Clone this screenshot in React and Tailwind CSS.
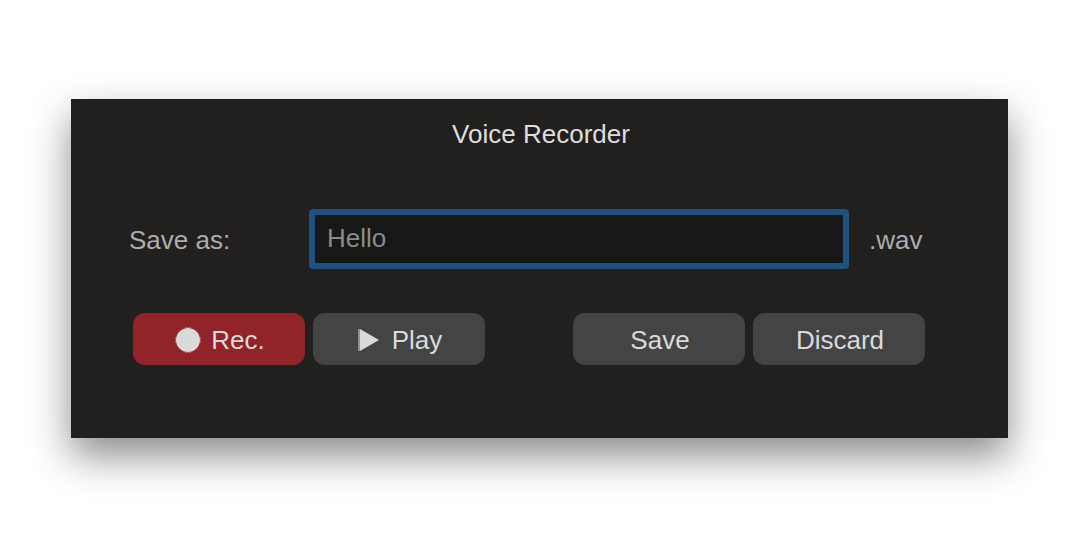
import { useState } from "react";

function ActionButton({ className = "bg-[#444444]", children }) {
  return (
    <button
      type="button"
      className={`flex h-[52px] w-[172px] items-center justify-center rounded-xl pt-0.5 pl-0.5 text-[#d9dbda] ${className}`}
    >
      {children}
    </button>
  );
}

export default function App() {
  const [name, setName] = useState("Hello");

  return (
    <main className="flex min-h-screen items-center bg-white pr-[70px] pl-[71px] font-['Liberation_Sans',Arial,sans-serif] text-[26px] leading-8">
      <section className="flex-1 bg-[#21201e] pt-[19px] pr-[83px] pb-[73px] pl-[58px] shadow-[0_18px_38px_rgba(0,0,0,0.46)]">
        <h1 className="pl-7 text-center text-[#dededd]">Voice Recorder</h1>

        <div className="mt-[59px] flex items-center">
          <label htmlFor="filename" className="w-[180px] pt-0.5 text-[#adadac]">
            Save as:
          </label>
          <input
            id="filename"
            type="text"
            value={name}
            onChange={(event) => setName(event.target.value)}
            className="h-[60px] min-w-0 flex-1 rounded border-6 border-[#1d5180] bg-[#171717] px-3 pb-0.5 text-[#8b8b8a] outline-none"
          />
          <span className="w-[76px] pt-0.5 pl-5 text-[#adadac]">.wav</span>
        </div>

        <div className="mt-11 flex flex-wrap justify-between gap-2 pl-1">
          <div className="flex gap-2">
            <ActionButton className="gap-2.5 bg-[#922329]">
              <svg viewBox="0 0 26 26" className="size-[26px]" fill="currentColor" aria-hidden="true">
                <circle cx="13" cy="13" r="12" />
                <path d="M10 0h6v1h-6zM10 25h6v1h-6zM0 10h1v6h-1zM25 10h1v6h-1z" opacity="0.3" />
              </svg>
              Rec.
            </ActionButton>
            <ActionButton className="gap-3 bg-[#444444]">
              <svg viewBox="0 0 22 24" className="h-6 w-[22px]" fill="currentColor" aria-hidden="true">
                <path d="M0 1h2v22H0z" opacity="0.5" />
                <path d="M2 1L21 12L2 23Z" />
              </svg>
              Play
            </ActionButton>
          </div>
          <div className="flex gap-2">
            <ActionButton>Save</ActionButton>
            <ActionButton>Discard</ActionButton>
          </div>
        </div>
      </section>
    </main>
  );
}
